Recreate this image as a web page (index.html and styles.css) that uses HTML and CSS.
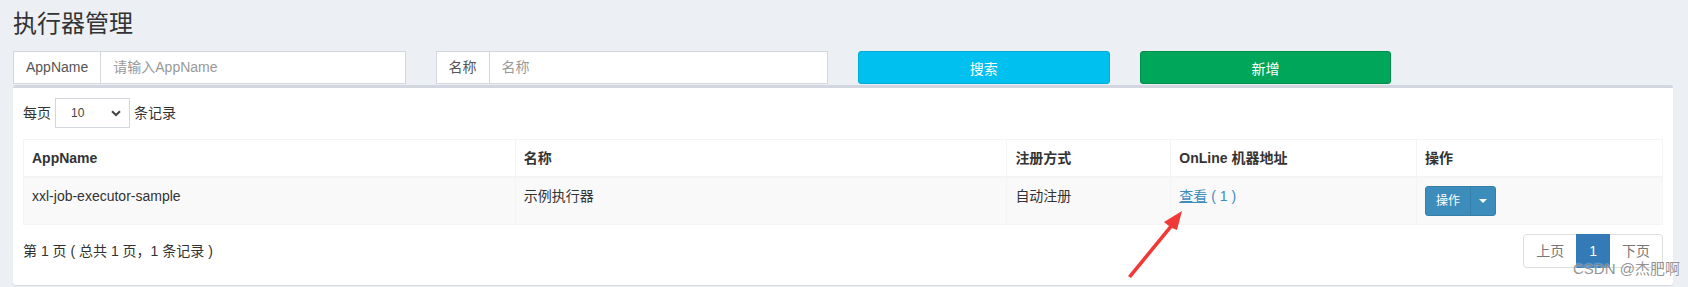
FILE: index.html
```html
<!DOCTYPE html>
<html lang="zh-CN">
<head>
<meta charset="utf-8">
<title>执行器管理</title>
<link rel="stylesheet" href="styles.css">
</head>
<body>
<div class="page">
  <section class="content-header">
    <h1>执行器管理</h1>
  </section>
  <section class="content">
    <div class="filters">
      <div class="input-group span3">
        <span class="addon">AppName</span>
        <span class="field placeholder">请输入AppName</span>
      </div>
      <div class="input-group span3">
        <span class="addon">名称</span>
        <span class="field placeholder">名称</span>
      </div>
      <button class="btn btn-info span2">搜索</button>
      <button class="btn btn-success span2">新增</button>
    </div>
    <div class="box">
      <div class="length">
        <span>每页</span>
        <span class="select"><span class="select-val">10</span>
          <svg class="chev" width="10" height="7" viewBox="0 0 10 7"><path d="M1 1.2 L5 5 L9 1.2" fill="none" stroke="#444" stroke-width="2"/></svg>
        </span>
        <span>条记录</span>
      </div>
      <table class="table">
        <thead>
          <tr>
            <th class="c1">AppName</th>
            <th class="c2">名称</th>
            <th class="c3">注册方式</th>
            <th class="c4">OnLine 机器地址</th>
            <th class="c5">操作</th>
          </tr>
        </thead>
        <tbody>
          <tr>
            <td>xxl-job-executor-sample</td>
            <td>示例执行器</td>
            <td>自动注册</td>
            <td><a class="link"><span class="u">查看</span> ( 1 )</a></td>
            <td>
              <div class="btn-group">
                <span class="bs bs-main">操作</span>
                <span class="bs bs-caret"><span class="caret"></span></span>
              </div>
            </td>
          </tr>
        </tbody>
      </table>
      <div class="footer">
        <div class="info">第 1 页 ( 总共 1 页，1 条记录 )</div>
        <ul class="pagination">
          <li class="pg disabled">上页</li>
          <li class="pg active">1</li>
          <li class="pg disabled">下页</li>
        </ul>
      </div>
    </div>
  </section>
  <svg class="arrow" width="1688" height="287" viewBox="0 0 1688 287">
    <path d="M1128 276 L1169 226 L1164 222 L1182 211 L1177 230 L1172 228 L1131 278 Z" fill="#f03a37"/>
  </svg>
  <div class="watermark">CSDN @杰肥啊</div>
</div>
</body>
</html>
```
FILE: styles.css
```css
html, body {
  margin: 0;
  padding: 0;
}
body {
  background: #ecf0f5;
  font-family: "Liberation Sans", "Noto Sans CJK SC", sans-serif;
  font-size: 14px;
  line-height: 20px;
  color: #333;
  width: 1688px;
  height: 287px;
  overflow: hidden;
}
.page {
  position: relative;
  height: 287px;
}
.content-header {
  padding: 11px 15px 0 13px;
}
.content-header h1 {
  margin: 0;
  font-size: 24px;
  line-height: 26px;
  font-weight: 400;
  color: #333;
}
.content {
  padding: 14px 15px 0 13px;
}
.filters {
  display: grid;
  grid-template-columns: repeat(12, 1fr);
  column-gap: 30px;
  height: 33px;
}
.span3 { grid-column: span 3; }
.span2 { grid-column: span 2; }
.input-group {
  display: flex;
  height: 33px;
  box-sizing: border-box;
  border: 1px solid #d2d6de;
  background: #fff;
}
.addon {
  padding: 0 12px;
  line-height: 31px;
  border-right: 1px solid #d2d6de;
  color: #555;
  white-space: nowrap;
}
.field {
  flex: 1;
  padding: 0 12px;
  line-height: 31px;
}
.placeholder { color: #999; }
.btn {
  height: 33px;
  box-sizing: border-box;
  border-radius: 3px;
  color: #fff;
  font-family: inherit;
  font-size: 14px;
  padding: 0;
  text-align: center;
}
.btn-info {
  background: #00c0ef;
  border: 1px solid #00acd6;
}
.btn-success {
  background: #00a65a;
  border: 1px solid #008d4c;
}
.box {
  margin-top: 1px;
  background: #fff;
  border-top: 3px solid #d2d6de;
  border-radius: 3px;
  box-shadow: 0 1px 1px rgba(0,0,0,0.1);
  padding: 10px 10px 17px 10px;
}
.length {
  display: flex;
  align-items: center;
  gap: 4px;
  height: 30px;
}
.select {
  display: flex;
  align-items: center;
  justify-content: space-between;
  width: 75px;
  height: 30px;
  box-sizing: border-box;
  border: 1px solid #d2d6de;
  padding: 0 8px 0 15px;
  font-size: 12px;
  color: #444;
}
.table {
  margin-top: 11px;
  width: 100%;
  border-collapse: collapse;
  border: 1px solid #f4f4f4;
}
.table th, .table td {
  padding: 8px;
  text-align: left;
  vertical-align: top;
  border: 1px solid #f4f4f4;
  line-height: 20px;
}
.table th {
  font-weight: 700;
  border-bottom-width: 2px;
  background: #fff;
}
.table tbody tr { background: #f9f9f9; }
.c1 { width: 30%; }
.c2 { width: 30%; }
.c3 { width: 10%; }
.c4 { width: 15%; }
.c5 { width: 15%; }
.table td { height: 30px; }
.link {
  color: #3c8dbc;
}
.link .u { text-decoration: underline; }
.btn-group {
  display: inline-flex;
  height: 30px;
  border-radius: 3px;
  overflow: hidden;
  border: 1px solid #367fa9;
  box-sizing: border-box;
  background: #3c8dbc;
}
.bs {
  display: flex;
  align-items: center;
  justify-content: center;
  color: #fff;
  font-size: 12px;
}
.bs-main {
  padding: 0 10px;
  border-right: 1px solid #367fa9;
}
.bs-caret {
  width: 24px;
}
.caret {
  width: 0;
  height: 0;
  border-top: 4px solid #fff;
  border-left: 4px solid transparent;
  border-right: 4px solid transparent;
}
.footer {
  display: flex;
  justify-content: space-between;
  align-items: center;
  margin-top: 9px;
}
.pagination {
  display: flex;
  list-style: none;
  margin: 0;
  padding: 0;
}
.pg {
  padding: 6px 12px;
  line-height: 20px;
  border: 1px solid #ddd;
  margin-left: -1px;
  color: #777;
  background: #fff;
}
.pg:first-child {
  border-radius: 4px 0 0 4px;
  margin-left: 0;
}
.pg:last-child {
  border-radius: 0 4px 4px 0;
}
.pg.active {
  background: #337ab7;
  border-color: #337ab7;
  color: #fff;
  position: relative;
}
.arrow {
  position: absolute;
  left: 0;
  top: 0;
  pointer-events: none;
}
.watermark {
  position: absolute;
  left: 1573px;
  top: 259px;
  font-size: 15px;
  line-height: 20px;
  color: rgba(110,110,110,0.75);
  text-shadow: 0 0 2px #fff;
  white-space: nowrap;
}
```
